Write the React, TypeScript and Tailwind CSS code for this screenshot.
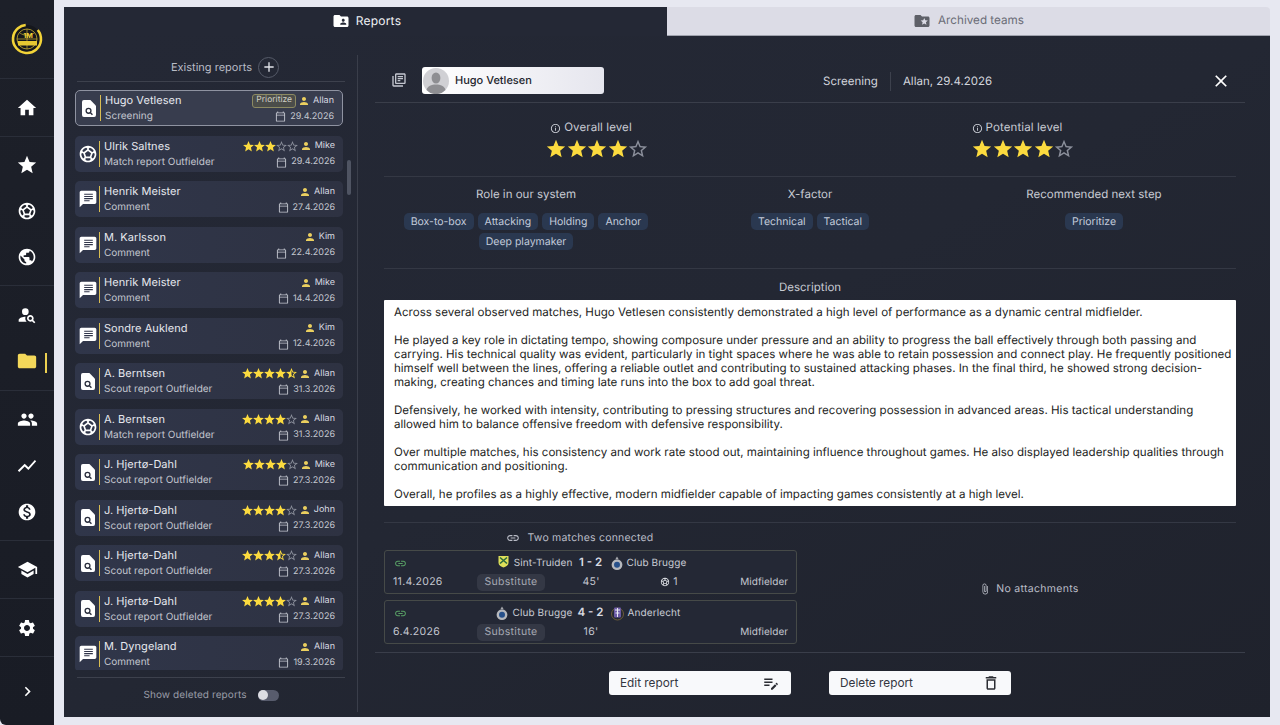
import React from 'react';
import {
	MdAdd,
	MdAttachFile,
	MdChatBubble,
	MdChevronRight,
	MdClose,
	MdDeleteOutline,
	MdEditNote,
	MdFolder,
	MdFolderShared,
	MdFolderSpecial,
	MdHome,
	MdInfoOutline,
	MdLink,
	MdMonetizationOn,
	MdOutlineCalendarToday,
	MdOutlineLibraryBooks,
	MdOutlineSportsSoccer,
	MdPeople,
	MdPerson,
	MdPersonSearch,
	MdPublic,
	MdSchool,
	MdSettings,
	MdShowChart,
	MdSportsSoccer,
	MdStar,
	MdStarBorder,
	MdStarHalf,
	MdSubject
} from 'react-icons/md';

type Report = {
	name: string;
	type: string;
	kind: 'scout' | 'match' | 'comment';
	author: string;
	date: string;
	stars?: number;
	badge?: string;
	selected?: boolean;
};

const reports: Report[] = [
	{ name: 'Hugo Vetlesen', type: 'Screening', kind: 'scout', author: 'Allan', date: '29.4.2026', badge: 'Prioritize', selected: true },
	{ name: 'Ulrik Saltnes', type: 'Match report Outfielder', kind: 'match', author: 'Mike', date: '29.4.2026', stars: 3 },
	{ name: 'Henrik Meister', type: 'Comment', kind: 'comment', author: 'Allan', date: '27.4.2026' },
	{ name: 'M. Karlsson', type: 'Comment', kind: 'comment', author: 'Kim', date: '22.4.2026' },
	{ name: 'Henrik Meister', type: 'Comment', kind: 'comment', author: 'Mike', date: '14.4.2026' },
	{ name: 'Sondre Auklend', type: 'Comment', kind: 'comment', author: 'Kim', date: '12.4.2026' },
	{ name: 'A. Berntsen', type: 'Scout report Outfielder', kind: 'scout', author: 'Allan', date: '31.3.2026', stars: 4.5 },
	{ name: 'A. Berntsen', type: 'Match report Outfielder', kind: 'match', author: 'Allan', date: '31.3.2026', stars: 4 },
	{ name: 'J. Hjertø-Dahl', type: 'Scout report Outfielder', kind: 'scout', author: 'Mike', date: '27.3.2026', stars: 4 },
	{ name: 'J. Hjertø-Dahl', type: 'Scout report Outfielder', kind: 'scout', author: 'John', date: '27.3.2026', stars: 4 },
	{ name: 'J. Hjertø-Dahl', type: 'Scout report Outfielder', kind: 'scout', author: 'Allan', date: '27.3.2026', stars: 3.5 },
	{ name: 'J. Hjertø-Dahl', type: 'Scout report Outfielder', kind: 'scout', author: 'Allan', date: '27.3.2026', stars: 4 },
	{ name: 'M. Dyngeland', type: 'Comment', kind: 'comment', author: 'Allan', date: '19.3.2026' }
];

const Logo = () => (
	<svg width="32" height="32" viewBox="0 0 32 32">
		<circle cx="16" cy="16" r="14" fill="#15171c" stroke="#f2d338" strokeWidth="2.6" strokeDasharray="74 14" transform="rotate(-40 16 16)" />
		<circle cx="16" cy="16" r="10" fill="none" stroke="#c9ae30" strokeWidth="0.8" />
		<path d="M6 16h20M16 6v20M9 10c4 3 10 3 14 0M9 22c4-3 10-3 14 0" fill="none" stroke="#c9ae30" strokeWidth="0.7" />
		<rect x="7" y="18" width="19" height="4.5" fill="#e6c832" />
		<text x="17" y="15" textAnchor="middle" fontSize="7" fontWeight="700" fill="#f2d338" fontFamily="Inter, sans-serif">1M</text>
	</svg>
);

const Stars = ({ value, size, gap }: { value: number; size: number; gap: string }) => (
	<div className={`flex items-center ${gap}`}>
		{[1, 2, 3, 4, 5].map((n) => {
			if (value >= n) return <MdStar key={n} size={size} className="shrink-0 text-[#fcdb3f]" />;
			if (value >= n - 0.5) return <MdStarHalf key={n} size={size} className="shrink-0 text-[#fcdb3f]" />;
			return <MdStarBorder key={n} size={size} className="shrink-0 text-[#8b8f9b]" />;
		})}
	</div>
);

const ScoutIcon = () => (
	<svg width="14" height="17" viewBox="0 0 15 18">
		<path d="M2 0h7l6 6v10a2 2 0 0 1-2 2H2a2 2 0 0 1-2-2V2a2 2 0 0 1 2-2z" fill="#fff" />
		<circle cx="7" cy="11.500" r="2.600" fill="none" stroke="#2a2e3d" strokeWidth="1.400" />
		<path d="M9 13.500l2.200 2.200" stroke="#2a2e3d" strokeWidth="1.500" />
	</svg>
);

const ReportIcon = ({ kind }: { kind: Report['kind'] }) => {
	if (kind === 'scout') return <ScoutIcon />;
	if (kind === 'match') return <MdOutlineSportsSoccer size={20} className="text-white" />;
	return (
		<span className="relative flex h-5 w-5 items-center justify-center">
			<MdChatBubble size={20} className="text-white" />
			<MdSubject size={13} className="absolute top-[2px] left-[3.5px] text-[#30354a]" />
		</span>
	);
};

const ReportCard = ({ report }: { report: Report }) => (
	<div
		className={`flex h-9 shrink-0 items-center rounded-[5px] pr-2 pl-[3px] ${
			report.selected
				? 'border border-[#8f93a1] bg-[#383d4e] pl-[2px]'
				: 'bg-gradient-to-r from-[#30364a] to-[#2e3242]'
		}`}
	>
		<div className="flex w-5 shrink-0 items-center justify-center">
			<ReportIcon kind={report.kind} />
		</div>
		<div className="mr-[4px] ml-[1px] h-[26px] w-px shrink-0 bg-[#d9bd52]" />
		<div className="flex min-w-0 flex-1 flex-col gap-[3px] pt-[1px]">
			<div className="flex h-[13px] items-center justify-between">
				<span className="text-[11px] tracking-[0.05px] text-[#e6e8ee]">{report.name}</span>
				<div className="flex items-center">
					{report.badge && (
						<span className="mr-[2px] flex h-[14px] items-center rounded-[3px] border border-[#8c8a62] bg-[#4b4d4a] px-[3px] text-[8.5px] text-[#cfcfc6]">
							{report.badge}
						</span>
					)}
					{report.stars !== undefined && (
						<div className="mr-[1px]">
							<Stars value={report.stars} size={13} gap="-space-x-[2px]" />
						</div>
					)}
					<MdPerson size={12} className="mr-[3px] text-[#ebcf5f]" />
					<span className="text-[9px] text-[#d9dbe2]">{report.author}</span>
				</div>
			</div>
			<div className="flex h-[13px] items-center justify-between">
				<span className="text-[10px] text-[#c3c6cf]">{report.type}</span>
				<div className="flex items-center">
					<MdOutlineCalendarToday size={11} className="mr-[4px] text-[#c3c6cf]" />
					<span className="text-[9px] text-[#c3c6cf]">{report.date}</span>
				</div>
			</div>
		</div>
	</div>
);

const NavItem = ({ children, active }: { children: React.ReactNode; active?: boolean }) => (
	<div className="relative flex h-[46px] items-center justify-center">
		{children}
		{active && <div className="absolute top-[15px] right-[7px] h-5 w-[2px] bg-[#ecd050]" />}
	</div>
);

const NavGroup = ({ h, children }: { h: string; children: React.ReactNode }) => (
	<div className={`flex flex-col justify-center border-b border-[#2a2e39] ${h}`}>{children}</div>
);

const Sidebar = () => (
	<aside className="flex h-full w-[54px] shrink-0 flex-col rounded-bl-md bg-gradient-to-b from-[#1d2029] to-[#191c25] text-white">
		<div className="flex h-[79px] items-center justify-center border-b border-[#2a2e39]">
			<Logo />
		</div>
		<NavGroup h="h-[58px]">
			<NavItem><MdHome size={22} /></NavItem>
		</NavGroup>
		<NavGroup h="h-[149px]">
			<NavItem><MdStar size={22} /></NavItem>
			<NavItem><MdOutlineSportsSoccer size={20} /></NavItem>
			<NavItem><MdPublic size={20} /></NavItem>
		</NavGroup>
		<NavGroup h="h-[105px]">
			<NavItem><MdPersonSearch size={20} /></NavItem>
			<NavItem active><MdFolder size={22} className="text-[#f4d85a]" /></NavItem>
		</NavGroup>
		<NavGroup h="h-[150px]">
			<NavItem><MdPeople size={21} /></NavItem>
			<NavItem><MdShowChart size={22} /></NavItem>
			<NavItem><MdMonetizationOn size={20} /></NavItem>
		</NavGroup>
		<NavGroup h="h-[58px]">
			<NavItem><MdSchool size={21} /></NavItem>
		</NavGroup>
		<NavGroup h="h-[58px]">
			<NavItem><MdSettings size={20} /></NavItem>
		</NavGroup>
		<div className="flex flex-1 items-center justify-center">
			<MdChevronRight size={19} />
		</div>
	</aside>
);

const ReportList = () => (
	<section className="flex h-[657px] w-[294px] shrink-0 flex-col border-r border-[#3a3e4a] pl-[11px]">
		<div className="mb-[8px] ml-[2px] w-[268px] border-b border-[#3d414d] pb-[2px]">
			<div className="flex h-[24px] items-center pl-[94px]">
				<span className="text-[11px] text-[#b9bcc6]">Existing reports</span>
				<span className="ml-[6px] flex h-[21px] w-[21px] items-center justify-center rounded-full border border-[#565b69] text-[#e2e4ea]">
					<MdAdd size={16} />
				</span>
			</div>
		</div>
		<div className="flex">
			<div className="flex h-[580px] w-[268px] flex-col gap-[9.5px] overflow-hidden">
				{reports.map((r, i) => (
					<ReportCard key={i} report={r} />
				))}
			</div>
			<div className="mt-[70px] ml-1 h-[35px] w-1 rounded-full bg-[#4f5462]" />
		</div>
		<div className="mt-[7px] ml-[2px] w-[268px] border-t border-[#3d414d] pt-[9px]">
			<div className="flex h-[16px] items-center justify-center">
				<span className="text-[10px] tracking-[0.1px] text-[#9a9da8]">Show deleted reports</span>
				<span className="ml-[11px] flex h-[11px] w-[21px] items-center rounded-full bg-[#585c6d]">
					<span className="h-[10px] w-[10px] rounded-full bg-[#dcdde3]" />
				</span>
			</div>
		</div>
	</section>
);

const Level = ({ label, value }: { label: string; value: number }) => (
	<div className="flex flex-col items-center">
		<div className="flex h-[14px] items-center gap-[3px] pr-[12px] text-[11.5px] tracking-[0.1px] text-[#c9ccd4]">
			<MdInfoOutline size={11} />
			{label}
		</div>
		<div className="mt-[3px]">
			<Stars value={value} size={22} gap="-space-x-[1.5px]" />
		</div>
	</div>
);

const Chip = ({ children }: { children: React.ReactNode }) => (
	<span className="flex h-[17px] items-center rounded-[5px] bg-[#2a3850] px-[7px] text-[10.5px] text-[#c3cbdb]">
		{children}
	</span>
);

const ChipColumn = ({ title, chips }: { title: string; chips: string[] }) => (
	<div className="flex flex-col items-center">
		<div className="text-[11.5px] leading-[14px] text-[#c9ccd4]">{title}</div>
		<div className="mt-[12px] flex flex-wrap justify-center gap-x-[4px] gap-y-[3px] px-[14px]">
			{chips.map((c) => (
				<Chip key={c}>{c}</Chip>
			))}
		</div>
	</div>
);

const Crest = ({ team }: { team: string }) => {
	if (team === 'Sint-Truiden')
		return (
			<svg width="11" height="13" viewBox="0 0 11 13" className="mb-1 shrink-0">
				<path d="M0.5 1h10v7c0 2-2.5 3.5-5 4.5-2.5-1-5-2.5-5-4.5z" fill="#dfe05a" />
				<path d="M2 2.5l7 6M9 2.5l-7 6" stroke="#2d6a3c" strokeWidth="1.6" />
			</svg>
		);
	if (team === 'Club Brugge')
		return (
			<svg width="12" height="15" viewBox="0 0 12 15" className="shrink-0">
				<path d="M6 0.5l1.5 2.5h-3z" fill="#a9abb0" />
				<circle cx="6" cy="8.7" r="5.4" fill="#b6b8bd" />
				<circle cx="6" cy="8.7" r="3" fill="#27508a" />
			</svg>
		);
	return (
		<svg width="13" height="15" viewBox="0 0 13 15" className="shrink-0">
			<circle cx="6.5" cy="8" r="6" fill="none" stroke="#6d5d3a" strokeWidth="1" />
			<rect x="3" y="1.5" width="7" height="10" rx="1" fill="#6b5aa6" />
			<path d="M4 4h5M4.5 7h4M6.5 2v9" stroke="#e8e8f2" strokeWidth="1" />
		</svg>
	);
};

const Team = ({ name }: { name: string }) => (
	<span className="text-[10px] tracking-[0.1px] text-[#c9ccd4]">{name}</span>
);

const MatchCard = ({
	home,
	away,
	score,
	date,
	minutes,
	goals
}: {
	home: string;
	away: string;
	score: string;
	date: string;
	minutes: string;
	goals?: number;
}) => (
	<div className="rounded-[3px] border border-[#464a48] bg-[#242835] px-2 pt-[3px] pb-[2px]">
		<div className="grid h-[18px] grid-cols-[1fr_36px_1fr] items-center">
			<div className="flex items-center justify-between">
				<MdLink size={13} className="ml-[1px] text-[#58a065]" />
				<div className="flex items-center gap-[5px]">
					<Crest team={home} />
					<Team name={home} />
				</div>
			</div>
			<span className="text-center text-[11.5px] font-semibold text-[#d9dbe2]">{score}</span>
			<div className="flex items-center gap-[4px] pl-[2px]">
				<Crest team={away} />
				<Team name={away} />
			</div>
		</div>
		<div className="mt-[1px] grid h-[18px] grid-cols-[84px_68px_92px_64px_1fr] items-center text-[10.5px] tracking-[0.3px] text-[#c3c6cf]">
			<span>{date}</span>
			<span className="flex h-[17px] items-center justify-center rounded-[5px] bg-[#343845] text-[#a5a8b2]">
				Substitute
			</span>
			<span className="text-center">{minutes}</span>
			<span className="flex items-center justify-center gap-[3px]">
				{goals !== undefined && (
					<>
						<MdSportsSoccer size={10} className="text-[#dfe1e6]" />
						{goals}
					</>
				)}
			</span>
			<span className="text-right text-[10px] tracking-normal">Midfielder</span>
		</div>
	</div>
);

const Avatar = () => (
	<svg width="26" height="26" viewBox="0 0 26 26" className="shrink-0">
		<circle cx="13" cy="13" r="13" fill="#d0d0d4" />
		<ellipse cx="13" cy="10" rx="4.400" ry="5.600" fill="#8e8e92" />
		<path d="M3.500 22c1-4 5-5.500 9.500-5.500s8.500 1.500 9.500 5.500a13 13 0 0 1-19 0z" fill="#8e8e92" />
	</svg>
);

const ActionButton = ({ label, icon }: { label: string; icon: React.ReactNode }) => (
	<button className="flex h-6 w-[182px] items-center justify-between rounded-[3px] bg-[#f8f9fb] px-[11px] text-[11.8px] text-[#33363f]">
		<span className="pt-[2px]">{label}</span>
		{icon}
	</button>
);

const ReportDetail = () => (
	<section className="flex min-w-0 flex-1 flex-col pr-[25px] pl-[17px]">
		<div className="flex h-[48px] items-start border-b border-[#3a3e4a] pt-[12px]">
			<div className="flex w-[47px] justify-center pt-[5px]">
				<MdOutlineLibraryBooks size={16} className="ml-[1px] text-[#c3c6cf]" />
			</div>
			<div className="flex h-[27px] w-[182px] items-center gap-[6px] rounded-[3px] bg-gradient-to-r from-[#ffffff] to-[#e6e6ee] pl-[1px] text-[11px] font-medium text-[#23252c]">
				<Avatar />
				Hugo Vetlesen
			</div>
			<div className="ml-[219px] flex h-[27px] items-center pt-[2px] text-[11.5px] text-[#d3d6dd]">
				Screening
				<span className="mx-[12px] h-[19px] w-px bg-[#3d414d]" />
				Allan, 29.4.2026
			</div>
			<div className="ml-auto flex h-[27px] items-center pr-[14px]">
				<MdClose size={20} className="text-white" />
			</div>
		</div>

		<div className="mx-[9px] grid h-[74px] grid-cols-2 border-b border-[#343844] pt-[18px]">
			<Level label="Overall level" value={4} />
			<Level label="Potential level" value={4} />
		</div>

		<div className="mx-[9px] grid h-[92px] grid-cols-3 border-b border-[#343844] pt-[10px]">
			<ChipColumn title="Role in our system" chips={['Box-to-box', 'Attacking', 'Holding', 'Anchor', 'Deep playmaker']} />
			<ChipColumn title="X-factor" chips={['Technical', 'Tactical']} />
			<ChipColumn title="Recommended next step" chips={['Prioritize']} />
		</div>

		<div className="mx-[9px] flex h-[254px] flex-col border-b border-[#343844] pt-[11px]">
			<div className="text-center text-[11.5px] leading-[14px] text-[#c9ccd4]">Description</div>
			<div className="mt-[6px] h-[206px] rounded-[1px] bg-white pt-[5px] pr-[4px] pl-[10px] text-[11.55px] leading-[14px] text-[#1c1d22]">
				<p>Across several observed matches, Hugo Vetlesen consistently demonstrated a high level of performance as a dynamic central midfielder.</p>
				<p className="mt-[14px]">He played a key role in dictating tempo, showing composure under pressure and an ability to progress the ball effectively through both passing and carrying. His technical quality was evident, particularly in tight spaces where he was able to retain possession and connect play. He frequently positioned himself well between the lines, offering a reliable outlet and contributing to sustained attacking phases. In the final third, he showed strong decision-making, creating chances and timing late runs into the box to add goal threat.</p>
				<p className="mt-[14px]">Defensively, he worked with intensity, contributing to pressing structures and recovering possession in advanced areas. His tactical understanding allowed him to balance offensive freedom with defensive responsibility.</p>
				<p className="mt-[14px]">Over multiple matches, his consistency and work rate stood out, maintaining influence throughout games. He also displayed leadership qualities through communication and positioning.</p>
				<p className="mt-[14px]">Overall, he profiles as a highly effective, modern midfielder capable of impacting games consistently at a high level.</p>
			</div>
		</div>

		<div className="flex h-[130px] border-b border-[#3a3e4a] pt-[8px] pl-[9px]">
			<div className="w-[413px] shrink-0">
				<div className="flex h-[14px] items-center justify-center gap-[8px] pr-[22px] text-[10.5px] tracking-[0.2px] text-[#b9bcc6]">
					<MdLink size={14} />
					Two matches connected
				</div>
				<div className="mt-[5px] flex flex-col gap-[6px]">
					<MatchCard home="Sint-Truiden" away="Club Brugge" score="1 - 2" date="11.4.2026" minutes="45'" goals={1} />
					<MatchCard home="Club Brugge" away="Anderlecht" score="4 - 2" date="6.4.2026" minutes="16'" />
				</div>
			</div>
			<div className="flex flex-1 items-center justify-center gap-[5px] pb-[6px] pl-[16px] text-[10.5px] tracking-[0.3px] text-[#b9bcc6]">
				<MdAttachFile size={12} />
				No attachments
			</div>
		</div>

		<div className="mt-[18px] flex justify-center gap-[38px]">
			<ActionButton label="Edit report" icon={<MdEditNote size={18} className="text-[#2b2d33]" />} />
			<ActionButton label="Delete report" icon={<MdDeleteOutline size={18} className="text-[#2b2d33]" />} />
		</div>
	</section>
);

export default function App() {
	return (
		<div className="flex h-[725px] w-[1280px] overflow-hidden bg-[#e7e8f1] font-['Inter',sans-serif] [text-rendering:geometricPrecision]">
			<Sidebar />
			<main className="mt-[7px] ml-[10px] flex h-[710px] w-[1206px] flex-col">
				<div className="flex h-[29px] shrink-0">
					<div className="flex w-[603px] justify-center bg-[#242835]">
						<div className="flex h-[34px] w-[157px] items-center justify-center gap-[6px] border-b-2 border-[#e6cb4d] pb-[4px] pl-[2px] text-[12px] tracking-[0.2px] text-[#f1f2f5]">
							<MdFolderShared size={18} className="text-white" />
							Reports
						</div>
					</div>
					<div className="flex w-[603px] items-center justify-center gap-[7px] rounded-tr-sm border-b border-[#9fa2ad] bg-[#dcdce6] text-[11.7px] text-[#6a6c76]">
						<MdFolderSpecial size={18} className="text-[#5e6068]" />
						Archived teams
					</div>
				</div>
				<div className="flex flex-1 bg-gradient-to-br from-[#242835] via-[#232733] to-[#1f222c] pt-[19px]">
					<ReportList />
					<ReportDetail />
				</div>
			</main>
		</div>
	);
}
